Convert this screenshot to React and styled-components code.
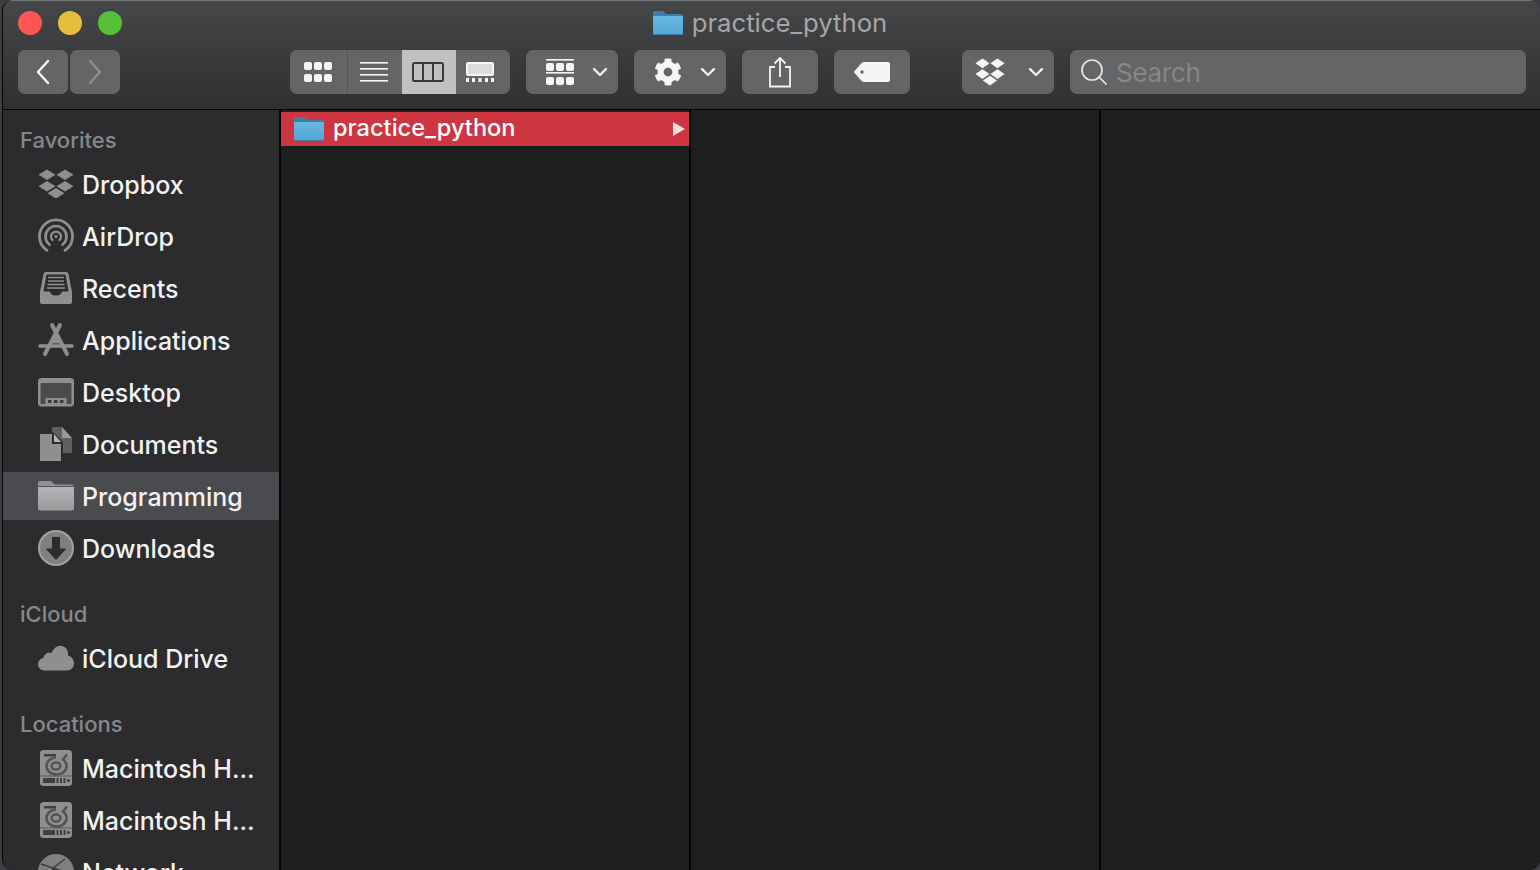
import React from "react";
import styled, { createGlobalStyle } from "styled-components";
import { FaCog } from "react-icons/fa";

const ICON = "#8e8f91";
const SIDE = "#2c2c2f";
const LINE = "#060607";

const GlobalStyle = createGlobalStyle`
  html, body {
    margin: 0;
    padding: 0;
    width: 1540px;
    height: 870px;
    overflow: hidden;
    background: #3d3e42;
    font-family: Inter, "Liberation Sans", sans-serif;
  }
`;

const DropboxGlyph = ({ color = ICON, width = 36, height = 30 }) => (
  <svg width={width} height={height} viewBox="0 0 36 30" fill={color} preserveAspectRatio="none">
    <path d="M9 0.5l8.5 5.2L9 11 0.5 5.7z" />
    <path d="M27 0.5l8.5 5.2L27 11l-8.5-5.3z" />
    <path d="M9 12l8.5 5.2L9 22.5 0.5 17.2z" />
    <path d="M27 12l8.5 5.2L27 22.5l-8.5-5.3z" />
    <path d="M18 19l8.5 5.2L18 29.5l-8.5-5.3z" />
  </svg>
);

const AirDropIcon = () => (
  <svg width="36" height="36" viewBox="0 0 36 36" fill="none" stroke={ICON} strokeLinecap="round">
    <path d="M9 32.3A16.5 16.5 0 1 1 27 32.3" strokeWidth="2.800" />
    <path d="M11.500 26.700A10.500 10.500 0 1 1 24.500 26.700" strokeWidth="2.600" />
    <path d="M14.500 22.100A5 5 0 1 1 21.500 22.100" strokeWidth="2.200" />
    <circle cx="18" cy="18.500" r="1.500" fill={ICON} stroke="none" />
  </svg>
);

const RecentsIcon = () => (
  <svg width="36" height="36" viewBox="0 0 36 36">
    <path fill={ICON} d="M8 2h20a2.5 2.5 0 0 1 2.5 2.2L34 22v10a2 2 0 0 1-2 2H4a2 2 0 0 1-2-2V22L5.500 4.200A2.500 2.500 0 0 1 8 2z" />
    <path fill={SIDE} d="M8.500 4.500h19L30.500 21.500H24c-.5 3-3 4-6 4s-5.500-1-6-4H5.500z" />
    <path stroke={ICON} strokeWidth="1.500" d="M10 7.500h16M10 11h16M9.500 14.500h17M9 18h18" />
  </svg>
);

const ApplicationsIcon = () => (
  <svg width="36" height="36" viewBox="0 0 36 36" fill="none" stroke={ICON} strokeLinecap="round">
    <path d="M14 3l15 29" strokeWidth="4" />
    <path d="M22 3L7 32" strokeWidth="4" />
    <path d="M2 24h32" strokeWidth="3.600" />
    <path d="M18 12l-5 9h10z" fill={ICON} strokeWidth="1" />
  </svg>
);

const DesktopIcon = () => (
  <svg width="36" height="36" viewBox="0 0 36 36">
    <rect x="0" y="4" width="36" height="28.500" rx="3.500" fill={ICON} />
    <rect x="2.500" y="9" width="31" height="21" rx="1" fill="#4a4b4d" />
    <rect x="7.500" y="24" width="21" height="6" fill={ICON} />
    <path fill="#3a3b3d" d="M10 26h3.500v3H10zM16 26h3.500v3H16zM22 26h3.500v3H22z" />
  </svg>
);

const DocumentsIcon = () => (
  <svg width="36" height="36" viewBox="0 0 36 36">
    <path fill="#5f6062" d="M14 1h10v11l10 0V27H25V16l-11-11z" />
    <path fill="#98999b" d="M24 1l10 11H24z" />
    <path fill={ICON} d="M2 8h12v10h9V35H2z" />
    <path fill="#b4b5b7" d="M16 8l7 8h-7z" />
  </svg>
);

const SideFolderIcon = () => (
  <svg width="36" height="36" viewBox="0 0 36 36">
    <defs>
      <linearGradient id="sideFolder" x1="0" y1="0" x2="0" y2="1">
        <stop offset="0" stopColor="#b3b4b6" />
        <stop offset="1" stopColor="#98999b" />
      </linearGradient>
    </defs>
    <path fill="#909193" d="M2 3h10c1.500 0 2 .8 3 2l1.500 1.500H33a3 3 0 0 1 3 3V14H0V5a2 2 0 0 1 2-2z" />
    <path fill="#55565a" d="M0 8h36v1H0z" />
    <path fill="url(#sideFolder)" d="M0 9h36v21a2.500 2.500 0 0 1-2.500 2.500h-31A2.500 2.500 0 0 1 0 30z" />
  </svg>
);

const DownloadsIcon = () => (
  <svg width="36" height="36" viewBox="0 0 36 36">
    <circle cx="18" cy="18" r="18" fill="#a0a1a3" />
    <circle cx="18" cy="18" r="16" fill="#7f8082" />
    <path fill={SIDE} d="M14 7h8v11.500h6.500L18 30 7.500 18.500H14z" />
  </svg>
);

const CloudIcon = () => (
  <svg width="36" height="36" viewBox="0 0 36 36">
    <path fill={ICON} d="M6.500 30.500C3 30.500 0 27.800 0 24.300 0 21 2.300 18.600 5.300 18 6 14 10 11.800 13.500 13 15.500 8.500 19.500 5 24 6c4.500 1 6.500 5 6 9.500 3.500 1 6 4 6 8 0 3.800-2.800 7-7 7z" />
  </svg>
);

const DiskIcon = () => (
  <svg width="36" height="36" viewBox="0 0 36 36">
    <rect x="2" y="0" width="32" height="36" rx="3.500" fill={ICON} />
    <rect x="6" y="4" width="12" height="2.500" fill="#3e3f41" />
    <path fill="none" stroke="#525355" strokeWidth="2.600" d="M29 4.500L25 9.500A10 8.500 0 1 1 18 7.500" />
    <ellipse cx="18" cy="16" rx="4.500" ry="3.500" fill="none" stroke="#525355" strokeWidth="2.400" />
    <rect x="2" y="25.500" width="32" height="1" fill="#5a5b5d" />
    <path fill="#3e3f41" d="M5 28h12v5H5zM18.500 28h2v5h-2zM22 28h2v5h-2zM25.500 28h2v5h-2z" />
    <circle cx="30.500" cy="30.500" r="1.600" fill="#3e3f41" />
  </svg>
);

const NetworkIcon = () => (
  <svg width="36" height="36" viewBox="0 0 36 36">
    <circle cx="18" cy="18" r="18" fill="#7f8082" />
    <path fill="none" stroke="#3a3b3d" strokeWidth="1.500" d="M3 10l12 4 12-9M15 14l-3 14M15 14l18 6M6 24l6 4 16 2" />
  </svg>
);

const BlueFolder = () => (
  <svg width="30" height="24" viewBox="0 0 30 24">
    <defs>
      <linearGradient id="blueFolder" x1="0" y1="0" x2="0" y2="1">
        <stop offset="0" stopColor="#66b8e2" />
        <stop offset="1" stopColor="#55a5d3" />
      </linearGradient>
    </defs>
    <path fill="#3f7ea6" d="M2 0h7c1.200 0 1.800.6 2.500 1.400L13 3h15a2 2 0 0 1 2 2v4H0V2a2 2 0 0 1 2-2z" />
    <path fill="url(#blueFolder)" d="M0 5h30v17a2 2 0 0 1-2 2H2a2 2 0 0 1-2-2z" />
    <path fill="#3d7da6" d="M1 23h28v1H1z" />
  </svg>
);

const Chevron = ({ dir = "left", color = "#f5f5f7" }) => (
  <svg width="16" height="26" viewBox="0 0 16 26" fill="none" stroke={color} strokeWidth="2.400" strokeLinecap="round" strokeLinejoin="round">
    <path d={dir === "left" ? "M13 2L3 13l10 11" : "M3 2l10 11L3 24"} />
  </svg>
);

const SmallChevron = () => (
  <svg width="16" height="10" viewBox="0 0 16 10" fill="none" stroke="#f5f5f7" strokeWidth="2.400" strokeLinecap="round" strokeLinejoin="round">
    <path d="M2 2l6 6 6-6" />
  </svg>
);

const GridGlyph = () => (
  <svg width="28" height="20" viewBox="0 0 28 20" fill="#f5f5f7">
    {[0, 10, 20].flatMap((x) =>
      [0, 12].map((y) => <rect key={`${x}-${y}`} x={x} y={y} width="8" height="8" rx="2" />)
    )}
  </svg>
);

const ListGlyph = () => (
  <svg width="28" height="20" viewBox="0 0 28 20" fill="#f5f5f7">
    {[0, 6, 12, 18].map((y) => (
      <rect key={y} x="0" y={y} width="28" height="1.600" />
    ))}
  </svg>
);

const ColumnsGlyph = () => (
  <svg width="32" height="20" viewBox="0 0 32 20" fill="none" stroke="#3a3b3d" strokeWidth="2">
    <rect x="1" y="1" width="30" height="18" rx="1.500" />
    <path d="M11 1v18M21 1v18" />
  </svg>
);

const GalleryGlyph = () => (
  <svg width="28" height="20" viewBox="0 0 28 20">
    <rect x="1" y="1" width="26" height="12" rx="1" fill="#dcdcde" stroke="#f5f5f7" strokeWidth="2" />
    <path fill="#f5f5f7" d="M0 16h3v4H0zM6 16h3v4H6zM12.500 16h3v4h-3zM19 16h3v4h-3zM25 16h3v4h-3z" />
  </svg>
);

const ArrangeGlyph = () => (
  <svg width="28" height="26" viewBox="0 0 28 26" fill="#f5f5f7">
    <rect x="0" y="0" width="28" height="1.600" />
    <rect x="0" y="13" width="28" height="1.600" />
    {[0, 10, 20].flatMap((x) =>
      [4, 18].map((y) => <rect key={`${x}-${y}`} x={x} y={y} width="8" height="8" rx="2" />)
    )}
  </svg>
);

const ShareGlyph = () => (
  <svg width="24" height="32" viewBox="0 0 24 32" fill="none" stroke="#f5f5f7" strokeWidth="1.800">
    <path d="M7 11H2v19.500h20V11h-5" />
    <path d="M12 21V2M6.500 7.500L12 2l5.500 5.500" />
  </svg>
);

const TagGlyph = () => (
  <svg width="36" height="20" viewBox="0 0 36 20">
    <path fill="#f5f5f7" fillRule="evenodd" d="M10 0h24a2 2 0 0 1 2 2v16a2 2 0 0 1-2 2H10c-1 0-1.700-.4-2.400-1L1 11.500a2 2 0 0 1 0-3L7.600 1C8.300.4 9 0 10 0zM8 8.300a1.700 1.700 0 1 0 0 3.400 1.700 1.700 0 0 0 0-3.400z" />
  </svg>
);

const SearchGlyph = () => (
  <svg width="28" height="28" viewBox="0 0 28 28" fill="none" stroke="#e6e6e8" strokeWidth="1.700" strokeLinecap="round">
    <circle cx="12" cy="12" r="10" />
    <path d="M19.500 19.500L26 26" />
  </svg>
);

const favorites = [
  { label: "Dropbox", icon: <DropboxGlyph /> },
  { label: "AirDrop", icon: <AirDropIcon /> },
  { label: "Recents", icon: <RecentsIcon /> },
  { label: "Applications", icon: <ApplicationsIcon /> },
  { label: "Desktop", icon: <DesktopIcon /> },
  { label: "Documents", icon: <DocumentsIcon /> },
  { label: "Programming", icon: <SideFolderIcon />, active: true },
  { label: "Downloads", icon: <DownloadsIcon /> },
];

const locations = [
  { label: "Macintosh H...", icon: <DiskIcon /> },
  { label: "Macintosh H...", icon: <DiskIcon /> },
  { label: "Network", icon: <NetworkIcon /> },
];

function SideSection({ title, items }) {
  return (
    <Section>
      <SectionTitle>{title}</SectionTitle>
      <RowList>
        {items.map((item, i) => (
          <SideRow key={i} $active={item.active}>
            <IconSlot>{item.icon}</IconSlot>
            <RowLabel>{item.label}</RowLabel>
          </SideRow>
        ))}
      </RowList>
    </Section>
  );
}

export default function App() {
  return (
    <>
      <GlobalStyle />
      <Window>
        <Header>
          <TitleRow>
            <Lights>
              <Light $color="#fc5753" />
              <Light $color="#e6bf3a" />
              <Light $color="#56c038" />
            </Lights>
            <WindowTitle>
              <BlueFolder />
              <span>practice_python</span>
            </WindowTitle>
          </TitleRow>
          <Toolbar>
            <NavGroup>
              <NavButton><Chevron dir="left" /></NavButton>
              <NavButton><Chevron dir="right" color="#8e8f91" /></NavButton>
            </NavGroup>
            <ViewGroup>
              <ViewSegment $width={58}><GridGlyph /></ViewSegment>
              <ViewSegment $width={54} $nudge={2}><ListGlyph /></ViewSegment>
              <ViewSegment $width={54} $nudge={2} $selected><ColumnsGlyph /></ViewSegment>
              <ViewSegment $width={54} $nudge={6}><GalleryGlyph /></ViewSegment>
            </ViewGroup>
            <MenuButton><ArrangeGlyph /><SmallChevron /></MenuButton>
            <MenuButton><FaCog size={28} color="#f5f5f7" /><SmallChevron /></MenuButton>
            <IconButton><ShareGlyph /></IconButton>
            <IconButton><TagGlyph /></IconButton>
            <DropboxButton><DropboxGlyph color="#f5f5f7" width={30} height={28} /><SmallChevron /></DropboxButton>
            <SearchBox>
              <SearchGlyph />
              <SearchText>Search</SearchText>
            </SearchBox>
          </Toolbar>
        </Header>
        <Body>
          <Sidebar>
            <SideSection title="Favorites" items={favorites} />
            <SideSection title="iCloud" items={[{ label: "iCloud Drive", icon: <CloudIcon /> }]} />
            <SideSection title="Locations" items={locations} />
          </Sidebar>
          <Column $width={408}>
            <FolderRow>
              <BlueFolder />
              <FolderName>practice_python</FolderName>
              <Disclosure />
            </FolderRow>
          </Column>
          <Column $width={408} />
          <Column />
        </Body>
      </Window>
    </>
  );
}

const Window = styled.div`
  margin-left: 2px;
  width: 1538px;
  height: 870px;
  box-sizing: border-box;
  border-left: 1px solid ${LINE};
  border-radius: 11px;
  overflow: hidden;
  display: flex;
  flex-direction: column;
  background: #1e1f21;
`;

const Header = styled.header`
  height: 110px;
  flex-shrink: 0;
  box-sizing: border-box;
  border-top: 1px solid #77787a;
  border-bottom: 1px solid ${LINE};
  background: linear-gradient(#454648, #2f3032);
  display: flex;
  flex-direction: column;
`;

const TitleRow = styled.div`
  height: 43px;
  flex-shrink: 0;
  display: grid;
  grid-template-columns: 1fr auto 1fr;
  align-items: center;
`;

const Lights = styled.div`
  display: flex;
  gap: 16px;
  padding-left: 15px;
`;

const Light = styled.span`
  width: 24px;
  height: 24px;
  border-radius: 50%;
  background: ${(p) => p.$color};
`;

const WindowTitle = styled.div`
  display: flex;
  align-items: center;
  gap: 9px;
  padding-right: 3px;
  font-size: 25.7px;
  color: #a6a6a8;
`;

const Toolbar = styled.div`
  display: flex;
  align-items: flex-start;
  padding: 6px 0 0 15px;
`;

const NavGroup = styled.div`
  display: flex;
  gap: 2px;
  margin-right: 170px;
`;

const ToolButton = styled.div`
  height: 44px;
  box-sizing: border-box;
  background: #646567;
  border-radius: 7px;
  display: flex;
  align-items: center;
  justify-content: center;
`;

const NavButton = styled(ToolButton)`
  width: 50px;
`;

const ViewGroup = styled.div`
  display: flex;
  height: 44px;
  border-radius: 7px;
  overflow: hidden;
  margin-right: 16px;
`;

const ViewSegment = styled.div`
  width: ${(p) => p.$width}px;
  padding-right: ${(p) => p.$nudge || 0}px;
  display: flex;
  align-items: center;
  justify-content: center;
  box-sizing: border-box;
  background: ${(p) => (p.$selected ? "#c0c1c3" : "#646567")};
  &:first-child {
    border-right: 1px solid #525355;
    padding-right: 2px;
  }
`;

const MenuButton = styled(ToolButton)`
  width: 92px;
  justify-content: flex-start;
  gap: 18px;
  padding-left: 20px;
  margin-right: 16px;
`;

const IconButton = styled(ToolButton)`
  width: 76px;
  margin-right: 16px;
`;

const DropboxButton = styled(MenuButton)`
  padding-left: 13px;
  gap: 23px;
  margin-left: 36px;
`;

const SearchBox = styled(ToolButton)`
  width: 456px;
  justify-content: flex-start;
  padding-left: 10px;
  gap: 8px;
`;

const SearchText = styled.span`
  font-size: 26px;
  letter-spacing: -0.3px;
  color: #86878a;
`;

const Body = styled.div`
  flex: 1;
  min-height: 0;
  display: flex;
`;

const Sidebar = styled.nav`
  width: 276px;
  flex-shrink: 0;
  box-sizing: border-box;
  padding-top: 10px;
  background: ${SIDE};
  display: flex;
  flex-direction: column;
  gap: 22px;
`;

const Section = styled.section`
  display: flex;
  flex-direction: column;
`;

const SectionTitle = styled.div`
  height: 40px;
  line-height: 40px;
  padding-left: 17px;
  font-size: 22px;
  font-weight: 500;
  color: #87888a;
`;

const RowList = styled.div`
  display: flex;
  flex-direction: column;
  gap: 4px;
`;

const SideRow = styled.div`
  height: 48px;
  flex-shrink: 0;
  display: flex;
  align-items: center;
  gap: 8px;
  padding-left: 35px;
  font-size: 25px;
  font-weight: 450;
  color: #f2f2f3;
  background: ${(p) => (p.$active ? "#4a4b4e" : "transparent")};
  white-space: nowrap;
`;

const RowLabel = styled.span`
  padding-top: 2px;
`;

const IconSlot = styled.span`
  width: 36px;
  height: 36px;
  flex-shrink: 0;
  display: flex;
  align-items: center;
  justify-content: center;
`;

const Column = styled.div`
  ${(p) => (p.$width ? `width: ${p.$width}px;` : "flex: 1;")}
  flex-shrink: 0;
  border-left: 2px solid ${LINE};
  padding-top: 2px;
  background: #1e1f21;
`;

const FolderRow = styled.div`
  height: 34px;
  display: flex;
  align-items: center;
  padding: 0 4px 0 13px;
  background: #cd3540;
`;

const FolderName = styled.span`
  flex: 1;
  margin-left: 9px;
  margin-bottom: 3px;
  font-size: 23.6px;
  font-weight: 450;
  color: #fff;
`;

const Disclosure = styled.span`
  width: 0;
  height: 0;
  border-style: solid;
  border-width: 7px 0 7px 12px;
  border-color: transparent transparent transparent #f6dcdd;
`;
